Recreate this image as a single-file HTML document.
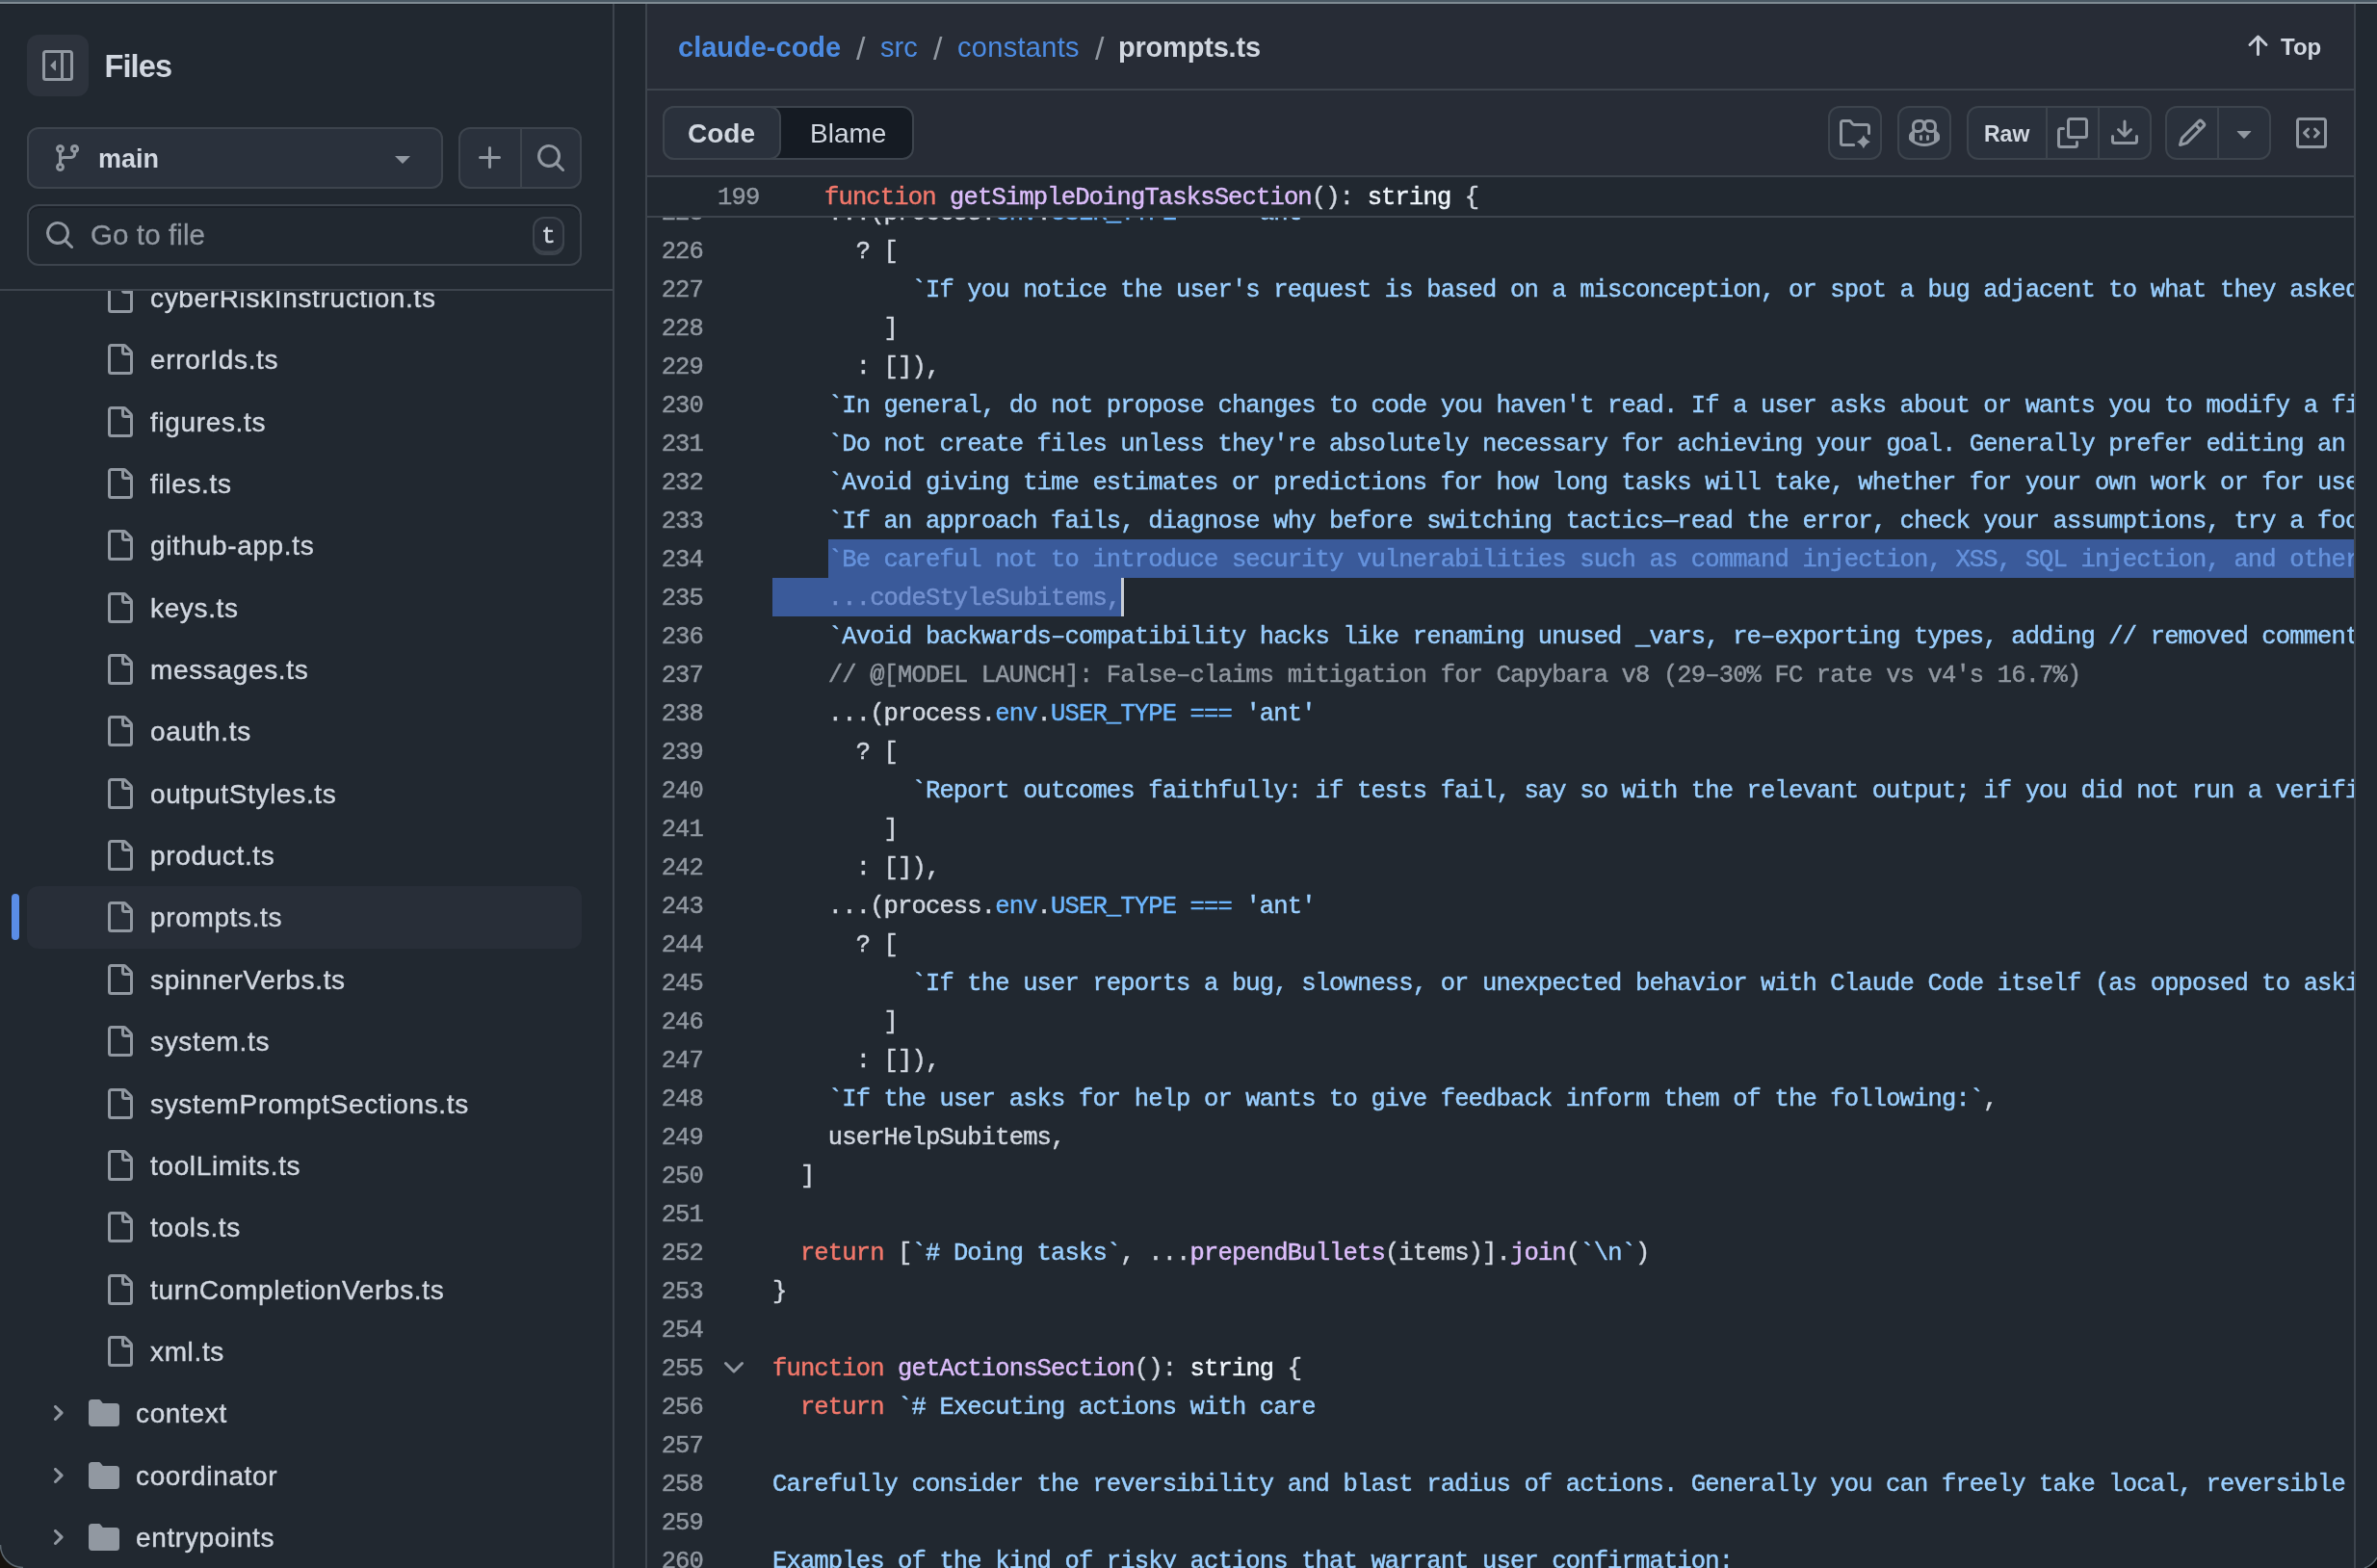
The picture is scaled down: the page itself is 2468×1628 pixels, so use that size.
<!DOCTYPE html>
<html lang="en">
<head>
<meta charset="utf-8">
<title>prompts.ts</title>
<style>
*{box-sizing:border-box;margin:0;padding:0}
html,body{width:2468px;height:1628px;overflow:hidden;background:#212830}
body{will-change:transform;position:relative;font-family:"Liberation Sans",sans-serif;color:#d1d7e0;-webkit-font-smoothing:antialiased}
.abs{position:absolute}
svg{display:block;position:absolute;overflow:visible}
.ic{fill:#9198a1}.ic2{fill:#c6ccd6}
/* top window strip */
#strip1{left:0;top:0;width:2468px;height:2px;background:#4a5964}
#strip2{left:0;top:2px;width:2468px;height:2px;background:#7f8b93}
#strip3{left:0;top:4px;width:2468px;height:1px;background:#1c222a}
/* sidebar */
#sb-border{left:636px;top:4px;width:2px;height:1624px;background:#3d444d}
#sb-sep{left:0;top:300px;width:636px;height:2px;background:#3d444d}
#files-btn{left:28px;top:36px;width:64px;height:64px;border-radius:12px;background:#2d333d}
#files-title{left:108.5px;top:48.6px;font-size:32.5px;letter-spacing:-0.9px;font-weight:700;line-height:40px;color:#d1d7e0;white-space:nowrap}
.btn{background:#2a313c;border:2px solid #3d444d;border-radius:12px}
#branch-btn{left:28px;top:132px;width:432px;height:64px}
#branch-txt{left:102px;top:147px;font-size:27px;font-weight:700;line-height:36px;white-space:nowrap}
#caret1{left:410px;top:162px;width:0;height:0;border-left:8px solid transparent;border-right:8px solid transparent;border-top:8px solid #9198a1}
#plus-grp{left:476px;top:132px;width:128px;height:64px}
#plus-div{left:540px;top:134px;width:2px;height:60px;background:#3d444d}
#goto{left:28px;top:212px;width:576px;height:64px;border:2px solid #3d444d;border-radius:12px;background:#212830;box-shadow:inset 0 2px 0 #1b2028}
#goto-txt{left:94px;top:225.5px;font-size:29.5px;letter-spacing:0.1px;-webkit-text-stroke:0.3px;line-height:36px;color:#9198a1;white-space:nowrap}
#kbd{left:553px;top:225px;width:33px;height:40px;border:2px solid #3d444d;border-radius:12px;background:#262c36;box-shadow:inset 0 -2.5px 0 #3d444d;font-family:"Liberation Mono",monospace;font-size:24px;-webkit-text-stroke:0.5px;line-height:38.5px;text-align:center;color:#d1d7e0}
/* tree */
#tree{left:0;top:302px;width:636px;height:1326px;overflow:hidden}
.row{position:absolute;left:0;width:636px;height:64px}
.row .nm{position:absolute;top:15px;letter-spacing:0.65px;-webkit-text-stroke:0.4px;font-size:28px;line-height:36px;white-space:nowrap;color:#d1d7e0}
.row.f .nm{left:156px}
.row.d .nm{left:141px}
.row.f svg.fi{left:108px;top:16px;width:32px;height:32px}
.row.d svg.di{left:92px;top:16px;width:32px;height:32px}
.row.d svg.ch{left:48px;top:20px;width:24px;height:24px}
#active-bg{left:28px;top:920px;width:576px;height:65px;border-radius:12px;background:#282e38}
#active-bar{left:12px;top:928px;width:8px;height:48px;border-radius:4px;background:#5a8de6}
/* main */
#main-bg{left:672px;top:4px;width:1772px;height:178px;background:#272c36}
#ml-border{left:670px;top:4px;width:2px;height:1624px;background:#3d444d}
#mr-border{left:2444px;top:4px;width:2px;height:1624px;background:#3d444d}
#h-sep1{left:672px;top:92px;width:1772px;height:2px;background:#3d444d}
#h-sep2{left:672px;top:182px;width:1772px;height:2px;background:#3d444d}
#h-sep3{left:672px;top:224px;width:1772px;height:2px;background:#3d444d}
#sticky{left:672px;top:184px;width:1772px;height:40px;background:#212830}
.bc{position:absolute;top:29px;font-size:29px;line-height:40px;white-space:nowrap}
.bc.l{color:#4c8be2}
.bc.s{color:#9198a1;font-size:34px;margin-top:1px;margin-left:1px}
.bc.b{font-weight:700}
/* code */
#code{left:672px;top:226px;width:1772px;height:1402px;overflow:hidden}
.mono{font-family:"Liberation Mono",monospace;font-size:25.5px;letter-spacing:-0.851px;line-height:40px;white-space:pre;-webkit-text-stroke:0.45px}
.ln{position:absolute;left:0;width:58px;text-align:right;color:#9198a1;height:40px}
.cl{position:absolute;left:130px;height:40px;color:#d1d7e0}
.k{color:#f2786b}.f{color:#dcbdfb}.s{color:#9acfff}.c{color:#6cb6ff}.cm{color:#9198a1}.w{color:#f0f6fc}.sel1{color:#6592dc}.sel2{color:#7391d0}
</style>
</head>
<body>
<div class="abs" id="strip1"></div><div class="abs" id="strip2"></div><div class="abs" id="strip3"></div>

<!-- SIDEBAR -->
<div class="abs" id="sb-border"></div>
<div class="abs" id="files-btn"></div>
<div class="abs" id="files-title">Files</div>
<div class="abs btn" id="branch-btn"></div>
<div class="abs" id="branch-txt">main</div>
<div class="abs" id="caret1"></div>
<div class="abs btn" id="plus-grp"></div>
<div class="abs" id="plus-div"></div>
<div class="abs" id="goto"></div>
<div class="abs" id="goto-txt">Go to file</div>
<div class="abs" id="kbd">t</div>
<div class="abs" id="sb-sep"></div>
<div class="abs" id="active-bg"></div>
<div class="abs" id="active-bar"></div>
<div class="abs" id="tree">
<div class="row f" style="top:-25.11px"><svg class="fi ic" viewBox="0 0 16 16"><path d="M2 1.75C2 .784 2.784 0 3.75 0h6.586c.464 0 .909.184 1.237.513l2.914 2.914c.329.328.513.773.513 1.237v9.586A1.75 1.75 0 0 1 13.25 16h-9.5A1.75 1.75 0 0 1 2 14.25Zm1.75-.25a.25.25 0 0 0-.25.25v12.5c0 .138.112.25.25.25h9.5a.25.25 0 0 0 .25-.25V6h-2.75A1.75 1.75 0 0 1 9 4.25V1.5Zm6.75.062V4.25c0 .138.112.25.25.25h2.688l-.011-.013-2.914-2.914-.013-.011Z"/></svg><span class="nm">cyberRiskInstruction.ts</span></div>
<div class="row f" style="top:39.25px"><svg class="fi ic" viewBox="0 0 16 16"><path d="M2 1.75C2 .784 2.784 0 3.75 0h6.586c.464 0 .909.184 1.237.513l2.914 2.914c.329.328.513.773.513 1.237v9.586A1.75 1.75 0 0 1 13.25 16h-9.5A1.75 1.75 0 0 1 2 14.25Zm1.75-.25a.25.25 0 0 0-.25.25v12.5c0 .138.112.25.25.25h9.5a.25.25 0 0 0 .25-.25V6h-2.75A1.75 1.75 0 0 1 9 4.25V1.5Zm6.75.062V4.25c0 .138.112.25.25.25h2.688l-.011-.013-2.914-2.914-.013-.011Z"/></svg><span class="nm">errorIds.ts</span></div>
<div class="row f" style="top:103.61px"><svg class="fi ic" viewBox="0 0 16 16"><path d="M2 1.75C2 .784 2.784 0 3.75 0h6.586c.464 0 .909.184 1.237.513l2.914 2.914c.329.328.513.773.513 1.237v9.586A1.75 1.75 0 0 1 13.25 16h-9.5A1.75 1.75 0 0 1 2 14.25Zm1.75-.25a.25.25 0 0 0-.25.25v12.5c0 .138.112.25.25.25h9.5a.25.25 0 0 0 .25-.25V6h-2.75A1.75 1.75 0 0 1 9 4.25V1.5Zm6.75.062V4.25c0 .138.112.25.25.25h2.688l-.011-.013-2.914-2.914-.013-.011Z"/></svg><span class="nm">figures.ts</span></div>
<div class="row f" style="top:167.97px"><svg class="fi ic" viewBox="0 0 16 16"><path d="M2 1.75C2 .784 2.784 0 3.75 0h6.586c.464 0 .909.184 1.237.513l2.914 2.914c.329.328.513.773.513 1.237v9.586A1.75 1.75 0 0 1 13.25 16h-9.5A1.75 1.75 0 0 1 2 14.25Zm1.75-.25a.25.25 0 0 0-.25.25v12.5c0 .138.112.25.25.25h9.5a.25.25 0 0 0 .25-.25V6h-2.75A1.75 1.75 0 0 1 9 4.25V1.5Zm6.75.062V4.25c0 .138.112.25.25.25h2.688l-.011-.013-2.914-2.914-.013-.011Z"/></svg><span class="nm">files.ts</span></div>
<div class="row f" style="top:232.33px"><svg class="fi ic" viewBox="0 0 16 16"><path d="M2 1.75C2 .784 2.784 0 3.75 0h6.586c.464 0 .909.184 1.237.513l2.914 2.914c.329.328.513.773.513 1.237v9.586A1.75 1.75 0 0 1 13.25 16h-9.5A1.75 1.75 0 0 1 2 14.25Zm1.75-.25a.25.25 0 0 0-.25.25v12.5c0 .138.112.25.25.25h9.5a.25.25 0 0 0 .25-.25V6h-2.75A1.75 1.75 0 0 1 9 4.25V1.5Zm6.75.062V4.25c0 .138.112.25.25.25h2.688l-.011-.013-2.914-2.914-.013-.011Z"/></svg><span class="nm">github-app.ts</span></div>
<div class="row f" style="top:296.69px"><svg class="fi ic" viewBox="0 0 16 16"><path d="M2 1.75C2 .784 2.784 0 3.75 0h6.586c.464 0 .909.184 1.237.513l2.914 2.914c.329.328.513.773.513 1.237v9.586A1.75 1.75 0 0 1 13.25 16h-9.5A1.75 1.75 0 0 1 2 14.25Zm1.75-.25a.25.25 0 0 0-.25.25v12.5c0 .138.112.25.25.25h9.5a.25.25 0 0 0 .25-.25V6h-2.75A1.75 1.75 0 0 1 9 4.25V1.5Zm6.75.062V4.25c0 .138.112.25.25.25h2.688l-.011-.013-2.914-2.914-.013-.011Z"/></svg><span class="nm">keys.ts</span></div>
<div class="row f" style="top:361.05px"><svg class="fi ic" viewBox="0 0 16 16"><path d="M2 1.75C2 .784 2.784 0 3.75 0h6.586c.464 0 .909.184 1.237.513l2.914 2.914c.329.328.513.773.513 1.237v9.586A1.75 1.75 0 0 1 13.25 16h-9.5A1.75 1.75 0 0 1 2 14.25Zm1.75-.25a.25.25 0 0 0-.25.25v12.5c0 .138.112.25.25.25h9.5a.25.25 0 0 0 .25-.25V6h-2.75A1.75 1.75 0 0 1 9 4.25V1.5Zm6.75.062V4.25c0 .138.112.25.25.25h2.688l-.011-.013-2.914-2.914-.013-.011Z"/></svg><span class="nm">messages.ts</span></div>
<div class="row f" style="top:425.41px"><svg class="fi ic" viewBox="0 0 16 16"><path d="M2 1.75C2 .784 2.784 0 3.75 0h6.586c.464 0 .909.184 1.237.513l2.914 2.914c.329.328.513.773.513 1.237v9.586A1.75 1.75 0 0 1 13.25 16h-9.5A1.75 1.75 0 0 1 2 14.25Zm1.75-.25a.25.25 0 0 0-.25.25v12.5c0 .138.112.25.25.25h9.5a.25.25 0 0 0 .25-.25V6h-2.75A1.75 1.75 0 0 1 9 4.25V1.5Zm6.75.062V4.25c0 .138.112.25.25.25h2.688l-.011-.013-2.914-2.914-.013-.011Z"/></svg><span class="nm">oauth.ts</span></div>
<div class="row f" style="top:489.77px"><svg class="fi ic" viewBox="0 0 16 16"><path d="M2 1.75C2 .784 2.784 0 3.75 0h6.586c.464 0 .909.184 1.237.513l2.914 2.914c.329.328.513.773.513 1.237v9.586A1.75 1.75 0 0 1 13.25 16h-9.5A1.75 1.75 0 0 1 2 14.25Zm1.75-.25a.25.25 0 0 0-.25.25v12.5c0 .138.112.25.25.25h9.5a.25.25 0 0 0 .25-.25V6h-2.75A1.75 1.75 0 0 1 9 4.25V1.5Zm6.75.062V4.25c0 .138.112.25.25.25h2.688l-.011-.013-2.914-2.914-.013-.011Z"/></svg><span class="nm">outputStyles.ts</span></div>
<div class="row f" style="top:554.13px"><svg class="fi ic" viewBox="0 0 16 16"><path d="M2 1.75C2 .784 2.784 0 3.75 0h6.586c.464 0 .909.184 1.237.513l2.914 2.914c.329.328.513.773.513 1.237v9.586A1.75 1.75 0 0 1 13.25 16h-9.5A1.75 1.75 0 0 1 2 14.25Zm1.75-.25a.25.25 0 0 0-.25.25v12.5c0 .138.112.25.25.25h9.5a.25.25 0 0 0 .25-.25V6h-2.75A1.75 1.75 0 0 1 9 4.25V1.5Zm6.75.062V4.25c0 .138.112.25.25.25h2.688l-.011-.013-2.914-2.914-.013-.011Z"/></svg><span class="nm">product.ts</span></div>
<div class="row f" style="top:618.49px"><svg class="fi ic" viewBox="0 0 16 16"><path d="M2 1.75C2 .784 2.784 0 3.75 0h6.586c.464 0 .909.184 1.237.513l2.914 2.914c.329.328.513.773.513 1.237v9.586A1.75 1.75 0 0 1 13.25 16h-9.5A1.75 1.75 0 0 1 2 14.25Zm1.75-.25a.25.25 0 0 0-.25.25v12.5c0 .138.112.25.25.25h9.5a.25.25 0 0 0 .25-.25V6h-2.75A1.75 1.75 0 0 1 9 4.25V1.5Zm6.75.062V4.25c0 .138.112.25.25.25h2.688l-.011-.013-2.914-2.914-.013-.011Z"/></svg><span class="nm">prompts.ts</span></div>
<div class="row f" style="top:682.85px"><svg class="fi ic" viewBox="0 0 16 16"><path d="M2 1.75C2 .784 2.784 0 3.75 0h6.586c.464 0 .909.184 1.237.513l2.914 2.914c.329.328.513.773.513 1.237v9.586A1.75 1.75 0 0 1 13.25 16h-9.5A1.75 1.75 0 0 1 2 14.25Zm1.75-.25a.25.25 0 0 0-.25.25v12.5c0 .138.112.25.25.25h9.5a.25.25 0 0 0 .25-.25V6h-2.75A1.75 1.75 0 0 1 9 4.25V1.5Zm6.75.062V4.25c0 .138.112.25.25.25h2.688l-.011-.013-2.914-2.914-.013-.011Z"/></svg><span class="nm">spinnerVerbs.ts</span></div>
<div class="row f" style="top:747.21px"><svg class="fi ic" viewBox="0 0 16 16"><path d="M2 1.75C2 .784 2.784 0 3.75 0h6.586c.464 0 .909.184 1.237.513l2.914 2.914c.329.328.513.773.513 1.237v9.586A1.75 1.75 0 0 1 13.25 16h-9.5A1.75 1.75 0 0 1 2 14.25Zm1.75-.25a.25.25 0 0 0-.25.25v12.5c0 .138.112.25.25.25h9.5a.25.25 0 0 0 .25-.25V6h-2.75A1.75 1.75 0 0 1 9 4.25V1.5Zm6.75.062V4.25c0 .138.112.25.25.25h2.688l-.011-.013-2.914-2.914-.013-.011Z"/></svg><span class="nm">system.ts</span></div>
<div class="row f" style="top:811.57px"><svg class="fi ic" viewBox="0 0 16 16"><path d="M2 1.75C2 .784 2.784 0 3.75 0h6.586c.464 0 .909.184 1.237.513l2.914 2.914c.329.328.513.773.513 1.237v9.586A1.75 1.75 0 0 1 13.25 16h-9.5A1.75 1.75 0 0 1 2 14.25Zm1.75-.25a.25.25 0 0 0-.25.25v12.5c0 .138.112.25.25.25h9.5a.25.25 0 0 0 .25-.25V6h-2.75A1.75 1.75 0 0 1 9 4.25V1.5Zm6.75.062V4.25c0 .138.112.25.25.25h2.688l-.011-.013-2.914-2.914-.013-.011Z"/></svg><span class="nm">systemPromptSections.ts</span></div>
<div class="row f" style="top:875.93px"><svg class="fi ic" viewBox="0 0 16 16"><path d="M2 1.75C2 .784 2.784 0 3.75 0h6.586c.464 0 .909.184 1.237.513l2.914 2.914c.329.328.513.773.513 1.237v9.586A1.75 1.75 0 0 1 13.25 16h-9.5A1.75 1.75 0 0 1 2 14.25Zm1.75-.25a.25.25 0 0 0-.25.25v12.5c0 .138.112.25.25.25h9.5a.25.25 0 0 0 .25-.25V6h-2.75A1.75 1.75 0 0 1 9 4.25V1.5Zm6.75.062V4.25c0 .138.112.25.25.25h2.688l-.011-.013-2.914-2.914-.013-.011Z"/></svg><span class="nm">toolLimits.ts</span></div>
<div class="row f" style="top:940.29px"><svg class="fi ic" viewBox="0 0 16 16"><path d="M2 1.75C2 .784 2.784 0 3.75 0h6.586c.464 0 .909.184 1.237.513l2.914 2.914c.329.328.513.773.513 1.237v9.586A1.75 1.75 0 0 1 13.25 16h-9.5A1.75 1.75 0 0 1 2 14.25Zm1.75-.25a.25.25 0 0 0-.25.25v12.5c0 .138.112.25.25.25h9.5a.25.25 0 0 0 .25-.25V6h-2.75A1.75 1.75 0 0 1 9 4.25V1.5Zm6.75.062V4.25c0 .138.112.25.25.25h2.688l-.011-.013-2.914-2.914-.013-.011Z"/></svg><span class="nm">tools.ts</span></div>
<div class="row f" style="top:1004.65px"><svg class="fi ic" viewBox="0 0 16 16"><path d="M2 1.75C2 .784 2.784 0 3.75 0h6.586c.464 0 .909.184 1.237.513l2.914 2.914c.329.328.513.773.513 1.237v9.586A1.75 1.75 0 0 1 13.25 16h-9.5A1.75 1.75 0 0 1 2 14.25Zm1.75-.25a.25.25 0 0 0-.25.25v12.5c0 .138.112.25.25.25h9.5a.25.25 0 0 0 .25-.25V6h-2.75A1.75 1.75 0 0 1 9 4.25V1.5Zm6.75.062V4.25c0 .138.112.25.25.25h2.688l-.011-.013-2.914-2.914-.013-.011Z"/></svg><span class="nm">turnCompletionVerbs.ts</span></div>
<div class="row f" style="top:1069.01px"><svg class="fi ic" viewBox="0 0 16 16"><path d="M2 1.75C2 .784 2.784 0 3.75 0h6.586c.464 0 .909.184 1.237.513l2.914 2.914c.329.328.513.773.513 1.237v9.586A1.75 1.75 0 0 1 13.25 16h-9.5A1.75 1.75 0 0 1 2 14.25Zm1.75-.25a.25.25 0 0 0-.25.25v12.5c0 .138.112.25.25.25h9.5a.25.25 0 0 0 .25-.25V6h-2.75A1.75 1.75 0 0 1 9 4.25V1.5Zm6.75.062V4.25c0 .138.112.25.25.25h2.688l-.011-.013-2.914-2.914-.013-.011Z"/></svg><span class="nm">xml.ts</span></div>
<div class="row d" style="top:1133.37px"><svg class="ch ic" viewBox="0 0 12 12"><path d="M4.7 10c-.2 0-.4-.1-.5-.2-.3-.3-.3-.8 0-1.1L6.9 6 4.2 3.3c-.3-.3-.3-.8 0-1.1.3-.3.8-.3 1.1 0l3.3 3.2c.3.3.3.8 0 1.1L5.3 9.7c-.2.2-.4.3-.6.3Z"/></svg><svg class="di ic" viewBox="0 0 16 16"><path d="M1.75 1A1.75 1.75 0 0 0 0 2.75v10.5C0 14.216.784 15 1.75 15h12.5A1.75 1.75 0 0 0 16 13.25v-8.5A1.75 1.75 0 0 0 14.25 3H7.5a.25.25 0 0 1-.2-.1l-.9-1.2C6.07 1.26 5.55 1 5 1H1.75Z"/></svg><span class="nm">context</span></div>
<div class="row d" style="top:1197.73px"><svg class="ch ic" viewBox="0 0 12 12"><path d="M4.7 10c-.2 0-.4-.1-.5-.2-.3-.3-.3-.8 0-1.1L6.9 6 4.2 3.3c-.3-.3-.3-.8 0-1.1.3-.3.8-.3 1.1 0l3.3 3.2c.3.3.3.8 0 1.1L5.3 9.7c-.2.2-.4.3-.6.3Z"/></svg><svg class="di ic" viewBox="0 0 16 16"><path d="M1.75 1A1.75 1.75 0 0 0 0 2.75v10.5C0 14.216.784 15 1.75 15h12.5A1.75 1.75 0 0 0 16 13.25v-8.5A1.75 1.75 0 0 0 14.25 3H7.5a.25.25 0 0 1-.2-.1l-.9-1.2C6.07 1.26 5.55 1 5 1H1.75Z"/></svg><span class="nm">coordinator</span></div>
<div class="row d" style="top:1262.09px"><svg class="ch ic" viewBox="0 0 12 12"><path d="M4.7 10c-.2 0-.4-.1-.5-.2-.3-.3-.3-.8 0-1.1L6.9 6 4.2 3.3c-.3-.3-.3-.8 0-1.1.3-.3.8-.3 1.1 0l3.3 3.2c.3.3.3.8 0 1.1L5.3 9.7c-.2.2-.4.3-.6.3Z"/></svg><svg class="di ic" viewBox="0 0 16 16"><path d="M1.75 1A1.75 1.75 0 0 0 0 2.75v10.5C0 14.216.784 15 1.75 15h12.5A1.75 1.75 0 0 0 16 13.25v-8.5A1.75 1.75 0 0 0 14.25 3H7.5a.25.25 0 0 1-.2-.1l-.9-1.2C6.07 1.26 5.55 1 5 1H1.75Z"/></svg><span class="nm">entrypoints</span></div>
</div>

<!-- MAIN -->
<div class="abs" id="main-bg"></div>
<div class="abs" id="ml-border"></div>
<div class="abs" id="mr-border"></div>
<div class="abs" id="h-sep1"></div>
<div class="abs" id="h-sep2"></div>
<div class="abs" id="sticky"></div>
<svg class="ic" style="left:44px;top:52px;width:32px;height:32px" viewBox="0 0 16 16"><path d="m4.177 7.823 2.396-2.396A.25.25 0 0 1 7 5.604v4.792a.25.25 0 0 1-.427.177L4.177 8.177a.25.25 0 0 1 0-.354ZM0 1.75C0 .784.784 0 1.75 0h12.5C15.216 0 16 .784 16 1.75v12.5A1.75 1.75 0 0 1 14.25 16H1.75A1.75 1.75 0 0 1 0 14.25Zm1.75-.25a.25.25 0 0 0-.25.25v12.5c0 .138.112.25.25.25H9.5v-13Zm12.5 13a.25.25 0 0 0 .25-.25V1.75a.25.25 0 0 0-.25-.25H11v13Z"/></svg>
<svg class="ic" style="left:54px;top:148px;width:32px;height:32px" viewBox="0 0 16 16"><path d="M9.5 3.25a2.25 2.25 0 1 1 3 2.122V6A2.5 2.5 0 0 1 10 8.5H6a1 1 0 0 0-1 1v1.128a2.251 2.251 0 1 1-1.5 0V5.372a2.25 2.25 0 1 1 1.5 0v1.836A2.493 2.493 0 0 1 6 7h4a1 1 0 0 0 1-1v-.628A2.25 2.25 0 0 1 9.5 3.25Zm-6 0a.75.75 0 1 0 1.5 0 .75.75 0 0 0-1.5 0Zm8.25-.75a.75.75 0 1 0 0 1.5.75.75 0 0 0 0-1.5ZM4.25 12a.75.75 0 1 0 0 1.5.75.75 0 0 0 0-1.5Z"/></svg>
<svg class="ic" style="left:493px;top:148px;width:32px;height:32px" viewBox="0 0 16 16"><path d="M7.75 2a.75.75 0 0 1 .75.75V7h4.25a.75.75 0 0 1 0 1.5H8.5v4.25a.75.75 0 0 1-1.5 0V8.5H2.75a.75.75 0 0 1 0-1.5H7V2.75A.75.75 0 0 1 7.75 2Z"/></svg>
<svg class="ic" style="left:556px;top:148px;width:32px;height:32px" viewBox="0 0 16 16"><path d="M10.68 11.74a6 6 0 0 1-7.922-8.982 6 6 0 0 1 8.982 7.922l3.04 3.04a.749.749 0 0 1-.326 1.275.749.749 0 0 1-.734-.215ZM11.5 7a4.499 4.499 0 1 0-8.997 0A4.499 4.499 0 0 0 11.5 7Z"/></svg>
<svg class="ic" style="left:46px;top:228px;width:32px;height:32px" viewBox="0 0 16 16"><path d="M10.68 11.74a6 6 0 0 1-7.922-8.982 6 6 0 0 1 8.982 7.922l3.04 3.04a.749.749 0 0 1-.326 1.275.749.749 0 0 1-.734-.215ZM11.5 7a4.499 4.499 0 1 0-8.997 0A4.499 4.499 0 0 0 11.5 7Z"/></svg>
<div class="bc l b" id="bc1" style="left:704px">claude-code</div>
<div class="bc s" id="bs1" style="left:888px">/</div>
<div class="bc l" id="bc2" style="left:914px">src</div>
<div class="bc s" id="bs2" style="left:968px">/</div>
<div class="bc l" id="bc3" style="left:994px;letter-spacing:0.3px">constants</div>
<div class="bc s" id="bs3" style="left:1136px">/</div>
<div class="bc b" id="bc4" style="left:1161px;color:#d1d7e0;letter-spacing:-0.2px">prompts.ts</div>
<svg class="ic2" style="left:2328px;top:32px;width:32px;height:32px" viewBox="0 0 16 16"><path d="M3.47 7.78a.75.75 0 0 1 0-1.06l4.25-4.25a.75.75 0 0 1 1.06 0l4.25 4.25a.751.751 0 0 1-.018 1.042.751.751 0 0 1-1.042.018L9 4.81v7.44a.75.75 0 0 1-1.5 0V4.81L4.53 7.78a.75.75 0 0 1-1.06 0Z"/></svg>
<div class="abs" id="top-txt" style="left:2368px;top:31px;font-size:24px;font-weight:700;line-height:36px;color:#d1d7e0">Top</div>
<div class="abs" id="seg" style="left:688px;top:110px;width:261px;height:56px;border-radius:12px;background:#151b23;border:2px solid #3d444d"></div>
<div class="abs" id="seg-sel" style="left:688px;top:110px;width:123px;height:56px;border-radius:12px;background:#2a313c;border:2px solid #3d444d"></div>
<div class="abs" id="seg-code" style="left:714px;top:121px;font-size:28px;font-weight:700;line-height:36px;color:#d1d7e0">Code</div>
<div class="abs" id="seg-blame" style="left:841px;top:121px;font-size:28px;line-height:36px;color:#d1d7e0">Blame</div>
<div class="abs btn" style="left:1898px;top:110px;width:56px;height:56px"></div>
<div class="abs btn" style="left:1970px;top:110px;width:56px;height:56px"></div>
<div class="abs btn" style="left:2042px;top:110px;width:192px;height:56px"></div>
<div class="abs" style="left:2124px;top:112px;width:2px;height:52px;background:#3d444d"></div>
<div class="abs" style="left:2178px;top:112px;width:2px;height:52px;background:#3d444d"></div>
<div class="abs btn" style="left:2248px;top:110px;width:110px;height:56px"></div>
<div class="abs" style="left:2302px;top:112px;width:2px;height:52px;background:#3d444d"></div>
<div class="abs" id="raw-txt" style="left:2060px;top:121px;font-size:23px;font-weight:700;line-height:36px;color:#d1d7e0">Raw</div>
<svg class="ic" style="left:1982px;top:122px;width:32px;height:32px" viewBox="0 0 16 16"><path d="M7.998 15.035c-4.562 0-7.873-2.914-7.998-3.749V9.338c.085-.628.677-1.686 1.588-2.065.013-.07.024-.143.036-.218.029-.183.06-.384.126-.612-.201-.508-.254-1.084-.254-1.656 0-.87.128-1.769.693-2.484.579-.733 1.494-1.124 2.724-1.261 1.206-.134 2.262.034 2.944.765.05.053.096.108.139.165.044-.057.094-.112.143-.165.682-.731 1.738-.899 2.944-.765 1.23.137 2.145.528 2.724 1.261.566.715.693 1.614.693 2.484 0 .572-.053 1.148-.254 1.656.066.228.098.429.126.612.012.076.024.148.037.218.924.385 1.522 1.471 1.591 2.095v1.872c0 .766-3.351 3.795-8.002 3.795Zm0-1.485c2.28 0 4.584-1.11 5.002-1.433V7.862l-.023-.116c-.49.21-1.075.291-1.727.291-1.146 0-2.059-.327-2.71-.991A3.222 3.222 0 0 1 8 6.303a3.24 3.24 0 0 1-.544.743c-.65.664-1.563.991-2.71.991-.652 0-1.236-.081-1.727-.291l-.023.116v4.255c.419.323 2.722 1.433 5.002 1.433ZM6.762 2.83c-.193-.206-.637-.413-1.682-.297-1.019.113-1.479.404-1.713.7-.247.312-.369.789-.369 1.554 0 .793.129 1.171.308 1.371.162.181.519.379 1.442.379.853 0 1.339-.235 1.638-.54.315-.322.527-.827.617-1.553.117-.935-.037-1.395-.241-1.614Zm4.155-.297c-1.044-.116-1.488.091-1.681.297-.204.219-.359.679-.242 1.614.091.726.303 1.231.618 1.553.299.305.784.54 1.638.54.922 0 1.28-.198 1.442-.379.179-.2.308-.578.308-1.371 0-.765-.123-1.242-.37-1.554-.233-.296-.693-.587-1.713-.7ZM6.25 9.037a.75.75 0 0 1 .75.75v1.501a.75.75 0 0 1-1.5 0V9.787a.75.75 0 0 1 .75-.75Zm4.25.75v1.501a.75.75 0 0 1-1.5 0V9.787a.75.75 0 0 1 1.5 0Z"/></svg>
<svg class="ic" style="left:2136px;top:122px;width:32px;height:32px" viewBox="0 0 16 16"><path d="M0 6.75C0 5.784.784 5 1.75 5h1.5a.75.75 0 0 1 0 1.5h-1.5a.25.25 0 0 0-.25.25v7.5c0 .138.112.25.25.25h7.5a.25.25 0 0 0 .25-.25v-1.5a.75.75 0 0 1 1.5 0v1.5A1.75 1.75 0 0 1 9.25 16h-7.5A1.75 1.75 0 0 1 0 14.25ZM5 1.75C5 .784 5.784 0 6.75 0h7.5C15.216 0 16 .784 16 1.75v7.5A1.75 1.75 0 0 1 14.25 11h-7.5A1.75 1.75 0 0 1 5 9.25Zm1.75-.25a.25.25 0 0 0-.25.25v7.5c0 .138.112.25.25.25h7.5a.25.25 0 0 0 .25-.25v-7.5a.25.25 0 0 0-.25-.25Z"/></svg>
<svg class="ic" style="left:2190px;top:122px;width:32px;height:32px" viewBox="0 0 16 16"><path d="M2.75 14A1.75 1.75 0 0 1 1 12.25v-2.5a.75.75 0 0 1 1.5 0v2.5c0 .138.112.25.25.25h10.5a.25.25 0 0 0 .25-.25v-2.5a.75.75 0 0 1 1.5 0v2.5A1.75 1.75 0 0 1 13.25 14ZM7.25 7.689V2a.75.75 0 0 1 1.5 0v5.689l1.97-1.969a.749.749 0 1 1 1.06 1.06l-3.25 3.25a.749.749 0 0 1-1.06 0L4.22 6.78a.749.749 0 1 1 1.06-1.06l1.97 1.969Z"/></svg>
<svg class="ic" style="left:2260px;top:122px;width:32px;height:32px" viewBox="0 0 16 16"><path d="M11.013 1.427a1.75 1.75 0 0 1 2.474 0l1.086 1.086a1.75 1.75 0 0 1 0 2.474l-8.61 8.61c-.21.21-.47.364-.756.445l-3.251.93a.75.75 0 0 1-.927-.928l.929-3.25c.081-.286.235-.547.445-.758l8.61-8.61Zm.176 4.823L9.75 4.81l-6.286 6.287a.253.253 0 0 0-.064.108l-.558 1.953 1.953-.558a.253.253 0 0 0 .108-.064Zm1.238-3.763a.25.25 0 0 0-.354 0L10.811 3.75l1.439 1.44 1.263-1.263a.25.25 0 0 0 0-.354Z"/></svg>
<svg class="ic" style="left:2314px;top:122px;width:32px;height:32px" viewBox="0 0 16 16"><path d="m4.427 7.427 3.396 3.396a.25.25 0 0 0 .354 0l3.396-3.396A.25.25 0 0 0 11.396 7H4.604a.25.25 0 0 0-.177.427Z"/></svg>
<svg class="ic" style="left:2384px;top:122px;width:32px;height:32px" viewBox="0 0 16 16"><path d="M0 1.75C0 .784.784 0 1.75 0h12.5C15.216 0 16 .784 16 1.75v12.5A1.75 1.75 0 0 1 14.25 16H1.75A1.75 1.75 0 0 1 0 14.25Zm1.75-.25a.25.25 0 0 0-.25.25v12.5c0 .138.112.25.25.25h12.5a.25.25 0 0 0 .25-.25V1.75a.25.25 0 0 0-.25-.25Zm7.47 3.97a.75.75 0 0 1 1.06 0l2 2a.75.75 0 0 1 0 1.06l-2 2a.749.749 0 0 1-1.275-.326.749.749 0 0 1 .215-.734L10.69 8 9.22 6.53a.75.75 0 0 1 0-1.06ZM6.78 6.53 5.31 8l1.47 1.47a.749.749 0 0 1-.326 1.275.749.749 0 0 1-.734-.215l-2-2a.75.75 0 0 1 0-1.06l2-2a.751.751 0 0 1 1.042.018.751.751 0 0 1 .018 1.042Z"/></svg>
<svg class="ic" style="left:1910px;top:122px;width:32px;height:32px" viewBox="0 0 16 16"><path d="M0 2.75C0 1.784.784 1 1.75 1H5c.55 0 1.07.26 1.4.7l.9 1.2a.25.25 0 0 0 .2.1h6.75c.966 0 1.75.784 1.75 1.75v3.5a.75.75 0 0 1-1.5 0v-3.5a.25.25 0 0 0-.25-.25H7.5c-.55 0-1.07-.26-1.4-.7l-.9-1.2a.25.25 0 0 0-.2-.1H1.75a.25.25 0 0 0-.25.25v10.5c0 .138.112.25.25.25h5.6a.75.75 0 0 1 0 1.5h-5.6A1.75 1.75 0 0 1 0 13.25Z"/><path d="M12.45 9.1Q13.489999999999998 11.559999999999999 15.95 12.6Q13.489999999999998 13.64 12.45 16.1Q11.41 13.64 8.95 12.6Q11.41 11.559999999999999 12.45 9.1Z"/></svg>
<div class="abs" id="code">
<div class="abs" style="left:188px;top:334px;width:1584px;height:40px;background:#3a5a9a"></div><div class="abs" style="left:130px;top:374px;width:362px;height:40px;background:#3a5a9a"></div><div class="abs" style="left:492px;top:374px;width:3px;height:40px;background:#c9ced6"></div>
<div class="mono ln" style="top:-24px">225</div><div class="mono cl" id="L225" style="top:-24px">    ...(process.<span class="c">env</span>.<span class="c">USER_TYPE</span> <span class="c">===</span> <span class="s">'ant'</span></div>
<div class="mono ln" style="top:16px">226</div><div class="mono cl" id="L226" style="top:16px">      ? [</div>
<div class="mono ln" style="top:56px">227</div><div class="mono cl" id="L227" style="top:56px">          <span class="s">`If you notice the user's request is based on a misconception, or spot a bug adjacent to what they asked about, say so. You're a collaborator, not just an executor—users benefit from your judgment, not just your compliance.`,</span></div>
<div class="mono ln" style="top:96px">228</div><div class="mono cl" id="L228" style="top:96px">        ]</div>
<div class="mono ln" style="top:136px">229</div><div class="mono cl" id="L229" style="top:136px">      : []),</div>
<div class="mono ln" style="top:176px">230</div><div class="mono cl" id="L230" style="top:176px">    <span class="s">`In general, do not propose changes to code you haven't read. If a user asks about or wants you to modify a file, read it first. Understand existing code before suggesting modifications.`,</span></div>
<div class="mono ln" style="top:216px">231</div><div class="mono cl" id="L231" style="top:216px">    <span class="s">`Do not create files unless they're absolutely necessary for achieving your goal. Generally prefer editing an existing file to creating a new one, as this prevents file bloat and builds on existing work more effectively.`,</span></div>
<div class="mono ln" style="top:256px">232</div><div class="mono cl" id="L232" style="top:256px">    <span class="s">`Avoid giving time estimates or predictions for how long tasks will take, whether for your own work or for users planning their projects. Focus on what needs to be done, not how long it might take.`,</span></div>
<div class="mono ln" style="top:296px">233</div><div class="mono cl" id="L233" style="top:296px">    <span class="s">`If an approach fails, diagnose why before switching tactics—read the error, check your assumptions, try a focused fix. Don't retry the identical action blindly, but don't abandon a viable approach after a single failure either.`,</span></div>
<div class="mono ln" style="top:336px">234</div><div class="mono cl" id="L234" style="top:336px">    <span class="sel1">`Be careful not to introduce security vulnerabilities such as command injection, XSS, SQL injection, and other OWASP top 10 vulnerabilities. If you notice that you wrote insecure code, immediately fix it.`,</span></div>
<div class="mono ln" style="top:376px">235</div><div class="mono cl" id="L235" style="top:376px"><span class="sel2">    ...codeStyleSubitems,</span></div>
<div class="mono ln" style="top:416px">236</div><div class="mono cl" id="L236" style="top:416px">    <span class="s">`Avoid backwards–compatibility hacks like renaming unused _vars, re–exporting types, adding // removed comments for removed code, etc. If you are certain that something is unused, you can delete it completely.`,</span></div>
<div class="mono ln" style="top:456px">237</div><div class="mono cl" id="L237" style="top:456px">    <span class="cm">// @[MODEL LAUNCH]: False–claims mitigation for Capybara v8 (29–30% FC rate vs v4's 16.7%)</span></div>
<div class="mono ln" style="top:496px">238</div><div class="mono cl" id="L238" style="top:496px">    ...(process.<span class="c">env</span>.<span class="c">USER_TYPE</span> <span class="c">===</span> <span class="s">'ant'</span></div>
<div class="mono ln" style="top:536px">239</div><div class="mono cl" id="L239" style="top:536px">      ? [</div>
<div class="mono ln" style="top:576px">240</div><div class="mono cl" id="L240" style="top:576px">          <span class="s">`Report outcomes faithfully: if tests fail, say so with the relevant output; if you did not run a verification step, say that rather than implying it succeeded. Never claim "all tests pass" when output shows failures.`,</span></div>
<div class="mono ln" style="top:616px">241</div><div class="mono cl" id="L241" style="top:616px">        ]</div>
<div class="mono ln" style="top:656px">242</div><div class="mono cl" id="L242" style="top:656px">      : []),</div>
<div class="mono ln" style="top:696px">243</div><div class="mono cl" id="L243" style="top:696px">    ...(process.<span class="c">env</span>.<span class="c">USER_TYPE</span> <span class="c">===</span> <span class="s">'ant'</span></div>
<div class="mono ln" style="top:736px">244</div><div class="mono cl" id="L244" style="top:736px">      ? [</div>
<div class="mono ln" style="top:776px">245</div><div class="mono cl" id="L245" style="top:776px">          <span class="s">`If the user reports a bug, slowness, or unexpected behavior with Claude Code itself (as opposed to asking you to fix their own code), recommend the appropriate slash command.`,</span></div>
<div class="mono ln" style="top:816px">246</div><div class="mono cl" id="L246" style="top:816px">        ]</div>
<div class="mono ln" style="top:856px">247</div><div class="mono cl" id="L247" style="top:856px">      : []),</div>
<div class="mono ln" style="top:896px">248</div><div class="mono cl" id="L248" style="top:896px">    <span class="s">`If the user asks for help or wants to give feedback inform them of the following:`</span>,</div>
<div class="mono ln" style="top:936px">249</div><div class="mono cl" id="L249" style="top:936px">    userHelpSubitems,</div>
<div class="mono ln" style="top:976px">250</div><div class="mono cl" id="L250" style="top:976px">  ]</div>
<div class="mono ln" style="top:1016px">251</div><div class="mono cl" id="L251" style="top:1016px"></div>
<div class="mono ln" style="top:1056px">252</div><div class="mono cl" id="L252" style="top:1056px">  <span class="k">return</span> [<span class="s">`# Doing tasks`</span>, ...<span class="f">prependBullets</span>(items)].<span class="f">join</span>(<span class="s">`\n`</span>)</div>
<div class="mono ln" style="top:1096px">253</div><div class="mono cl" id="L253" style="top:1096px">}</div>
<div class="mono ln" style="top:1136px">254</div><div class="mono cl" id="L254" style="top:1136px"></div>
<div class="mono ln" style="top:1176px">255</div><div class="mono cl" id="L255" style="top:1176px"><span class="k">function</span> <span class="f">getActionsSection</span>(): <span class="w">string</span> {</div>
<div class="mono ln" style="top:1216px">256</div><div class="mono cl" id="L256" style="top:1216px">  <span class="k">return</span> <span class="s">`# Executing actions with care</span></div>
<div class="mono ln" style="top:1256px">257</div><div class="mono cl" id="L257" style="top:1256px"></div>
<div class="mono ln" style="top:1296px">258</div><div class="mono cl" id="L258" style="top:1296px"><span class="s">Carefully consider the reversibility and blast radius of actions. Generally you can freely take local, reversible actions like editing files or running tests. But for actions that are hard to reverse, affect shared systems</span></div>
<div class="mono ln" style="top:1336px">259</div><div class="mono cl" id="L259" style="top:1336px"></div>
<div class="mono ln" style="top:1376px">260</div><div class="mono cl" id="L260" style="top:1376px"><span class="s">Examples of the kind of risky actions that warrant user confirmation:</span></div>
<svg class="ic" style="left:74px;top:1178px;width:32px;height:32px" viewBox="0 0 16 16"><path d="M12.78 5.22a.749.749 0 0 1 0 1.06l-4.25 4.25a.749.749 0 0 1-1.06 0L3.22 6.28a.749.749 0 1 1 1.06-1.06L8 8.939l3.72-3.719a.749.749 0 0 1 1.06 0Z"/></svg>
</div>
<div class="abs" id="h-sep3"></div>
<div class="abs mono" style="left:745px;top:186px;color:#9198a1">199</div><div class="abs mono" id="st-code" style="left:856px;top:186px;color:#d1d7e0"><span class="k">function</span> <span class="f">getSimpleDoingTasksSection</span>(): <span class="w">string</span> {</div>
<svg style="left:0;top:1604px;width:24px;height:24px" viewBox="0 0 24 24"><path d="M0 0V24H24A24 24 0 0 1 0 0Z" fill="#17130f"/><path d="M0.5 0A23.5 23.5 0 0 0 24 23.5" fill="none" stroke="#5b666e" stroke-width="1.5"/></svg><svg style="left:2455px;top:1617px;width:13px;height:11px" viewBox="0 0 13 11"><path d="M13 0V11H0A24 24 0 0 0 13 0Z" fill="#07070a"/><path d="M0 11A24 24 0 0 0 13 0" fill="none" stroke="#5b666e" stroke-width="1.5"/></svg>
</body>
</html>
